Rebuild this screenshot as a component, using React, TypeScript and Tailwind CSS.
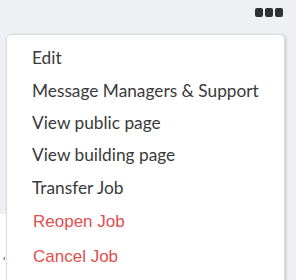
const items = [
  "Edit",
  "Message Managers & Support",
  "View public page",
  "View building page",
  "Transfer Job",
]

const danger = ["Reopen Job", "Cancel Job"]

const App = () => {
  return (
    <div className="relative h-[280px] w-[296px] overflow-hidden bg-[#eef0f3]">
      {/* top bar with dots */}
      <div className="flex h-[34px] justify-end pr-[13px] pt-[8px]">
        <div className="flex gap-[2px]">
          <span className="h-[9px] w-[8px] rounded-[2px] bg-[#2f3235]" />
          <span className="h-[9px] w-[8px] rounded-[2px] bg-[#2f3235]" />
          <span className="h-[9px] w-[8px] rounded-[2px] bg-[#2f3235]" />
        </div>
      </div>

      {/* card behind */}
      <div className="absolute left-0 top-[214px] h-[80px] w-[40px] bg-white">
        <span className="absolute left-[3px] top-[36px] text-[10px] leading-none text-[#333]">,</span>
      </div>

      {/* menu */}
      <div className="absolute left-[6px] top-[34px] h-[260px] w-[279px] rounded-[5px] border border-[#d9dcdf] bg-white pt-[7px] shadow-[1px_1px_3px_rgba(0,0,0,0.18)]">
        {items.map((t) => (
          <div
            key={t}
            className="flex h-[32.4px] items-center pl-[25px] text-[17.3px] text-[#3a3a3a] font-['Lato',sans-serif]"
          >
            {t}
          </div>
        ))}
        {danger.map((t) => (
          <div
            key={t}
            className="flex h-[35px] items-center pl-[26px] text-[17px] text-[#e04f4f] font-['Liberation_Sans',Arial,sans-serif]"
          >
            {t}
          </div>
        ))}
      </div>
    </div>
  )
}

export default App
